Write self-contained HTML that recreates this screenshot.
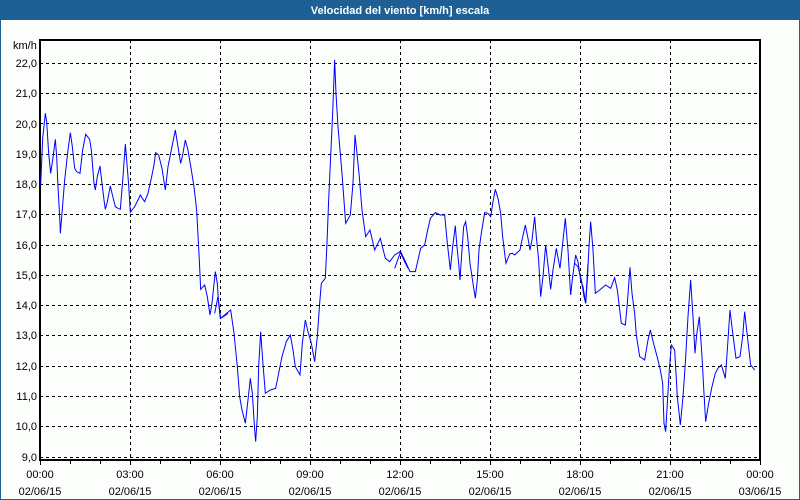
<!DOCTYPE html>
<html><head><meta charset="utf-8"><style>
html,body{margin:0;padding:0;width:800px;height:500px;overflow:hidden;background:#fcfefc}
svg{display:block}
text{font-family:"Liberation Sans",sans-serif;font-size:11px;fill:#000}
</style></head><body>
<svg width="800" height="500" xmlns="http://www.w3.org/2000/svg">
<rect x="0" y="0" width="800" height="500" fill="#1e6096"/>
<rect x="1" y="20" width="798" height="479" fill="#fcfefc"/>
<text x="400" y="14" text-anchor="middle" style="font-weight:bold;fill:#fff;font-size:11px">Velocidad del viento [km/h] escala</text>
<g stroke="#000" stroke-width="1" stroke-dasharray="3,3" fill="none" shape-rendering="crispEdges">
<path d="M40 63.5H760M40 93.5H760M40 123.5H760M40 154.5H760M40 184.5H760M40 214.5H760M40 245.5H760M40 275.5H760M40 305.5H760M40 335.5H760M40 366.5H760M40 396.5H760M40 426.5H760M40 457.5H760"/>
<path d="M130.5 40V460M220.5 40V460M310.5 40V460M400.5 40V460M490.5 40V460M580.5 40V460M670.5 40V460"/>
</g>
<g stroke="#000" stroke-width="2" fill="none" shape-rendering="crispEdges">
<path d="M40 40H760V460H40Z"/>
</g>
<g stroke="#000" stroke-width="1" shape-rendering="crispEdges">
<path d="M40.5 460V465M70.5 460V464M100.5 460V464M130.5 460V465M160.5 460V464M190.5 460V464M220.5 460V465M250.5 460V464M280.5 460V464M310.5 460V465M340.5 460V464M370.5 460V464M400.5 460V465M430.5 460V464M460.5 460V464M490.5 460V465M520.5 460V464M550.5 460V464M580.5 460V465M610.5 460V464M640.5 460V464M670.5 460V465M700.5 460V464M730.5 460V464M760.5 460V465"/>
</g>
<g fill="none" stroke="#0000ff" stroke-width="1">
<polyline vector-effect="non-scaling-stroke" transform="translate(38,50) scale(0.3333)" points="8,405 14,265 22,190 26,215 32,310 38,370 44,330 52,268 56,320 60,410 66,520 67,550 72,490 80,390 90,300 97,248 103,290 110,355 116,365 126,370 134,300 143,253 155,268 160,300 168,400 172,420 178,380 186,348 192,400 198,450 202,478 208,455 217,408 222,430 232,470 240,475 247,478 255,380 262,282 266,330 272,405 277,487 290,470 300,450 307,435 313,445 320,455 330,430 340,385 348,345 353,308 362,315 372,355 382,420 390,350 400,300 412,240 420,290 428,340 433,320 442,270 450,300 460,360 468,410 476,480 484,630 488,718 500,705 508,740 516,795 522,760 532,665 538,700 542,760 547,805 556,800 570,790"/>
<polyline vector-effect="non-scaling-stroke" transform="translate(218,50) scale(0.3333)" points="-10,790 0,740 8,805 20,795 38,780 48,850 58,950 65,1040 72,1080 82,1120 90,1050 97,985 103,1030 110,1140 113,1175 118,1100 122,950 128,845 134,930 142,1030 157,1020 173,1015 182,970 192,920 205,875 217,855 225,900 232,950 246,975 253,880 262,810 270,845 280,880 290,935 298,860 305,760 310,700 322,685 327,580 332,450 338,320 344,190 350,30 354,130 360,230 372,370 383,520 397,495 405,400 411,255 416,300 424,380 432,480 443,560 456,540 470,600 487,565 502,625 515,635 530,615 546,605 560,635 570,655"/>
<polyline vector-effect="non-scaling-stroke" transform="translate(398,50) scale(0.3333)" points="-10,655 8,605 20,630 36,665 52,665 60,630 68,595 80,585 88,545 97,505 112,488 127,495 140,495 148,580 157,660 164,590 172,527 176,580 182,640 186,690 192,600 197,530 203,515 209,560 216,640 225,700 232,745 238,690 243,600 250,550 260,488 270,490 278,500 285,455 292,418 300,445 308,490 314,560 320,610 324,640 335,612 343,610 350,615 366,600 372,570 382,525 390,565 396,600 402,570 410,500 415,560 422,630 428,740 435,680 443,585 450,645 458,718 465,660 475,595 486,655 492,600 502,505 510,600 518,735 524,680 533,615 540,635 548,690 555,710 563,760 570,640"/>
<polyline vector-effect="non-scaling-stroke" transform="translate(578,50) scale(0.3333)" points="-10,640 0,650 10,690 18,740 23,760 28,690 33,590 38,515 45,600 52,730 65,720 83,705 98,715 110,683 118,720 124,770 130,820 142,825 148,760 156,652 162,730 170,790 175,855 185,920 200,930 210,870 217,840 228,885 240,930 247,960 254,1000 258,1120 263,1145 268,1060 274,960 280,885 290,900 298,1040 307,1125 315,1040 322,940 330,800 338,690 345,800 351,910 356,855 364,800 372,920 378,1030 383,1115 392,1060 402,1010 412,970 420,955 430,945 442,985 448,900 456,780 463,840 474,925 486,920 494,860 500,785 506,840 518,945 530,960"/>
</g>
<g text-anchor="end">
<text x="37" y="67">22,0</text>
<text x="37" y="97">21,0</text>
<text x="37" y="128">20,0</text>
<text x="37" y="158">19,0</text>
<text x="37" y="188">18,0</text>
<text x="37" y="218">17,0</text>
<text x="37" y="249">16,0</text>
<text x="37" y="279">15,0</text>
<text x="37" y="309">14,0</text>
<text x="37" y="339">13,0</text>
<text x="37" y="370">12,0</text>
<text x="37" y="400">11,0</text>
<text x="37" y="430">10,0</text>
<text x="37" y="461">9,0</text>
</g>
<text x="13" y="49">km/h</text>
<g text-anchor="middle">
<text x="40" y="478">00:00</text><text x="40" y="495">02/06/15</text>
<text x="130" y="478">03:00</text><text x="130" y="495">02/06/15</text>
<text x="220" y="478">06:00</text><text x="220" y="495">02/06/15</text>
<text x="310" y="478">09:00</text><text x="310" y="495">02/06/15</text>
<text x="400" y="478">12:00</text><text x="400" y="495">02/06/15</text>
<text x="490" y="478">15:00</text><text x="490" y="495">02/06/15</text>
<text x="580" y="478">18:00</text><text x="580" y="495">02/06/15</text>
<text x="670" y="478">21:00</text><text x="670" y="495">02/06/15</text>
<text x="760" y="478">00:00</text><text x="760" y="495">03/06/15</text>
</g>
</svg>
</body></html>
